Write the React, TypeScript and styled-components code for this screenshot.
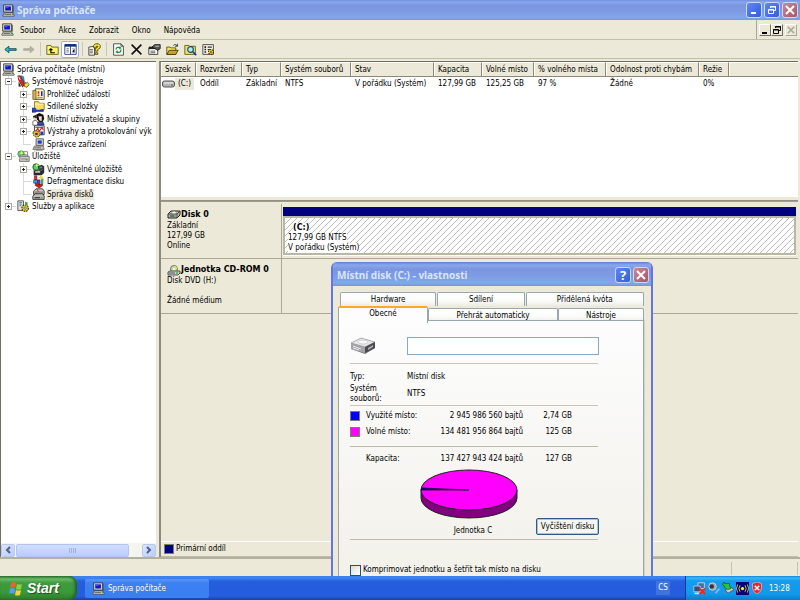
import React from "react";
import styled, { createGlobalStyle, css } from "styled-components";

const FACE = "#ece9d8";
const SHADOW = "#aca899";
const UI_FONT = '"DejaVu Sans Condensed", "Open Sans", sans-serif';
const BOLD_FONT = '"DejaVu Sans", "Open Sans", sans-serif';

const GlobalStyle = createGlobalStyle`
  * { box-sizing: border-box; }
  body { margin: 0; font: 8px/10px ${UI_FONT}; color: #000; }
  button, input { font: inherit; color: inherit; padding: 0; margin: 0; border: 0; background: none; }
  ul { list-style: none; margin: 0; padding: 0; }
  h1, h2, h3, p, dl, dd { margin: 0; font: inherit; }
  svg { display: block; flex: none; }
`;

/* ---------- icons ---------- */

type IconProps = { size?: number; children?: React.ReactNode };
const Icon = ({ size = 13, children }: IconProps) => (
  <svg width={size} height={size} viewBox="0 0 16 16" aria-hidden="true">{children}</svg>
);

const ComputerIcon = ({ size }: { size?: number }) => (
  <Icon size={size}>
    <path d="M2 1h11v9H2z" fill="#d4d0c8" stroke="#333" />
    <path d="M4 3h7v5H4z" fill="#0a18c8" />
    <path d="M4 3h4v2H4z" fill="#3a52ff" />
    <path d="M13 1.5l1.5 1v8L13 11z" fill="#555" />
    <path d="M3 11h10l2 3v1H1v-1z" fill="#d8d5ca" stroke="#333" strokeWidth=".8" />
    <path d="M3 13h8" stroke="#555" />
    <path d="M12 13h2" stroke="#0a0" />
  </Icon>
);
const ToolsIcon = () => (
  <Icon>
    <path d="M5 1l3 1 1 6 5 5-2 2-6-4z" fill="#22b4ec" stroke="#003a80" strokeWidth=".7" />
    <path d="M1 1l3 0 3 5 2 5-2 4-3-5-2-4z" fill="#e02818" stroke="#400" strokeWidth=".7" />
    <path d="M2 8l3 6H2z" fill="#1a1a1a" />
    <path d="M9 11l4-2 2 3-3 3-3-1z" fill="#ffd84a" stroke="#5a4200" strokeWidth=".8" />
    <path d="M2 2l2 4" stroke="#fff" />
  </Icon>
);
const EventIcon = () => (
  <Icon>
    <path d="M4 1h9l2 2v11H4z" fill="#fff8b8" stroke="#333" />
    <path d="M1 3h4v11H1z" fill="#d2b04a" stroke="#443300" strokeWidth=".7" />
    <path d="M7 4h2v3H7zM7 8h2v2H7z" fill="#e02020" />
    <path d="M11 4h2v6h-2z" fill="#1530d0" />
    <path d="M6 12h7" stroke="#666" />
  </Icon>
);
const SharedIcon = () => (
  <Icon>
    <path d="M3 2h5l1 2h6v8H3z" fill="#f7df63" stroke="#8a6d0c" />
    <path d="M4 5h10" stroke="#fffbd0" />
    <path d="M0 10h4l2 2h8v2H6l-2 1H0z" fill="#2744c8" stroke="#001060" strokeWidth=".7" />
    <path d="M5 11h4l3 1H6z" fill="#f2d4b4" />
  </Icon>
);
const UsersIcon = () => (
  <Icon>
    <path d="M5 2l4-2 5 2 1 5-2 4h-4L6 8z" fill="#101010" />
    <path d="M8 4l4 0 0 6-3-1z" fill="#f7dccb" />
    <path d="M1 4l4-2 1 4-3 3z" fill="#242424" />
    <path d="M2 5l4 2-1 3-3-1z" fill="#f2cfb3" />
    <path d="M1 10l4-1 3 4-2 2H1z" fill="#fff" stroke="#222" strokeWidth=".7" />
    <path d="M7 11l6-1 2 4-1 1H7z" fill="#1c50c0" stroke="#012" strokeWidth=".6" />
    <path d="M9 11l2 3" stroke="#d02020" />
  </Icon>
);
const AlertsIcon = () => (
  <Icon>
    <path d="M3 1h12v11H3z" fill="#fff" stroke="#222" />
    <path d="M5 8l2-4 2 4 3-5 2 3" fill="none" stroke="#d01818" strokeWidth="1.3" />
    <path d="M4 3h10" stroke="#2048c0" />
    <path d="M1 9l3-2 4 1 2 3-1 3-4 1-3-2z" fill="#d8b833" stroke="#3c2d00" strokeDasharray="2 1" />
    <path d="M4 10h3v2H4z" fill="#222" />
    <path d="M10 8l4 0v3l-3 2z" fill="#243bb6" />
  </Icon>
);
const DeviceIcon = () => (
  <Icon>
    <path d="M5 1h9v8H5z" fill="#d8d6ce" stroke="#444" />
    <path d="M7 3h5v4H7z" fill="#1a40c8" />
    <path d="M3 10h11l1 4H1z" fill="#c6c4bc" stroke="#444" strokeWidth=".8" />
    <path d="M3 12h8M5 15h8" stroke="#666" />
  </Icon>
);
const StorageIcon = () => (
  <Icon>
    <circle cx="5" cy="5" r="4" fill="#6fd66b" stroke="#2f6f45" strokeWidth=".8" />
    <path d="M5 1l3 3-3 1z" fill="#f4ef5a" />
    <circle cx="5" cy="5" r="1" fill="#fff" />
    <path d="M4 6h8l3 2v6H3z" fill="#cfcdc8" stroke="#444" strokeWidth=".8" />
    <path d="M8 2h5v4" fill="none" stroke="#777" />
    <path d="M5 8h9M5 11h8" stroke="#777" />
    <path d="M11 12h2" stroke="#0a0" />
  </Icon>
);
const RemovableIcon = () => (
  <Icon>
    <circle cx="5" cy="5" r="4" fill="#54cf68" stroke="#164c2c" />
    <path d="M5 1l4 2-4 2z" fill="#f8e83c" />
    <path d="M7 4l5-2 3 2v4l-6 1z" fill="#333" />
    <path d="M2 9h10l3-2v5l-3 3H2z" fill="#2a2a2a" />
    <path d="M4 10h6v2H4z" fill="#cfcfcf" />
    <path d="M9 5l3-1 1 2-4 1z" fill="#3b88d8" />
  </Icon>
);
const DefragIcon = () => (
  <Icon>
    <path d="M3 1h3v5H3z" fill="#e62a2a" stroke="#500" strokeWidth=".6" />
    <path d="M2 6h5v4H2z" fill="#28a8f0" stroke="#003" strokeWidth=".6" />
    <path d="M7 6h3v6H7z" fill="#a020c0" stroke="#303" strokeWidth=".6" />
    <path d="M8 3l3-2 3 2-3 2z" fill="#f0d429" />
    <path d="M4 10l6 2 3-2v3l-4 3-5-3z" fill="#d61515" stroke="#400" strokeWidth=".6" />
    <path d="M11 5l3-1v6l-3 1z" fill="#2bbb50" />
  </Icon>
);
const DisksIcon = () => (
  <Icon>
    <path d="M2 4l3-3h8l2 3v4H2z" fill="#ccc9c2" stroke="#222" />
    <path d="M3 5h11M3 7h3" stroke="#555" />
    <path d="M1 10l3-3h9l2 3v4H1z" fill="#bdbab4" stroke="#222" />
    <path d="M3 12h7" stroke="#333" strokeWidth="1.4" />
    <path d="M11 12h2" stroke="#0b0" />
    <path d="M6 1l2 4" stroke="#c81f1f" />
  </Icon>
);
const ServicesIcon = () => (
  <Icon>
    <path d="M1 1h7v12H1z" fill="#e4e1d8" stroke="#444" />
    <path d="M3 3h3M3 5h3M3 7h2" stroke="#1c62b4" />
    <circle cx="10" cy="10" r="4" fill="#e8c936" stroke="#3e3000" strokeWidth="1.4" strokeDasharray="2 1" />
    <circle cx="10" cy="10" r="1.4" fill="#fff" stroke="#222" strokeWidth=".7" />
    <path d="M10 2l3 1v3h-3z" fill="#3c9a3c" />
  </Icon>
);
const VolumeIcon = () => (
  <svg width="13" height="8" viewBox="0 0 13 8" aria-hidden="true">
    <rect x=".5" y="1" width="12" height="6" rx="2" fill="#b5b5b5" stroke="#555" />
    <path d="M2 3h9" stroke="#f2f2f2" />
    <path d="M9 5h2" stroke="#2a7a2a" />
  </svg>
);
const HardDiskIcon = () => (
  <svg width="14" height="10" viewBox="0 0 14 10" aria-hidden="true">
    <path d="M1 4l3-3h9v4l-3 3H1z" fill="#b9b9b3" stroke="#222" />
    <path d="M1 4h9l3-3M10 4v4" fill="none" stroke="#444" />
    <path d="M3 6h4" stroke="#222" />
    <path d="M7 6h2" stroke="#0b0" />
    <ellipse cx="7" cy="2.500" rx="2" ry="1" fill="#eee" />
  </svg>
);
const CdDriveIcon = () => (
  <svg width="14" height="11" viewBox="0 0 14 11" aria-hidden="true">
    <circle cx="7" cy="4" r="3.500" fill="#b9e4b0" stroke="#555" strokeWidth=".8" />
    <path d="M7 4l1-3 3 2z" fill="#f4e63c" />
    <circle cx="7" cy="4" r="1" fill="#fff" />
    <path d="M1 7l2-1h10v2l-2 2H1z" fill="#ccc" stroke="#333" strokeWidth=".8" />
    <path d="M2 8h6" stroke="#555" />
    <path d="M9 8h2" stroke="#0a0" />
  </svg>
);

const BackIcon = () => (
  <Icon><path d="M1 8l5-4v3h9v2H6v3z" fill="#19c8cf" stroke="#093a46" /></Icon>
);
const ForwardIcon = () => (
  <Icon><path d="M15 8l-5-4v3H2v2h8v3z" fill="#b5b2a4" stroke="#aaa798" /></Icon>
);
const FolderUpIcon = () => (
  <Icon>
    <path d="M1 3h5l1 2h8v9H1z" fill="#fff56e" stroke="#5a5200" />
    <path d="M6 8v4h5" fill="none" stroke="#000" strokeWidth="1.400" />
    <path d="M3 9l3-3 3 3z" fill="#000" />
  </Icon>
);
const TreeToggleIcon = () => (
  <Icon>
    <path d="M1 2h14v12H1z" fill="#fff" stroke="#14287c" />
    <path d="M1 3h14" stroke="#14287c" strokeWidth="3" />
    <path d="M8 4v10" stroke="#14287c" />
    <path d="M3 7h3M3 9h3M3 11h3" stroke="#667" />
    <path d="M13 7v5l-3-2z" fill="#111" />
    <path d="M10 7h3M10 12h3" stroke="#8890a8" />
  </Icon>
);
const HelpSheetIcon = () => (
  <Icon>
    <path d="M1 5l7-1v11H1z" fill="#f6f3e8" stroke="#333" />
    <path d="M2 8h4M2 10h4M2 12h4" stroke="#555" />
    <path d="M7 6V3l2-2h4l2 2v3l-3 2v2H9V7l3-2V4h-2v2z" fill="#ffe92c" stroke="#3d3700" />
    <path d="M9 12h3v2H9z" fill="#ffe92c" stroke="#3d3700" />
  </Icon>
);
const RefreshIcon = () => (
  <Icon>
    <path d="M2 1h9l3 3v11H2z" fill="#fff" stroke="#333" />
    <path d="M11 1v3h3" fill="none" stroke="#333" />
    <path d="M5 8c0-3 3-3 5-2M11 8c0 4-3 4-5 3" fill="none" stroke="#159034" strokeWidth="1.600" />
    <path d="M9 4l3 2-3 2zM7 9l-3 2 3 2z" fill="#159034" />
  </Icon>
);
const DeleteIcon = () => (
  <Icon><path d="M2 2l12 12M14 2L2 14" stroke="#111" strokeWidth="2" /></Icon>
);
const PropertiesIcon = () => (
  <Icon>
    <path d="M1 6h11v8H1z" fill="#fff" stroke="#222" />
    <path d="M1 6h11" stroke="#222" strokeWidth="3" />
    <path d="M3 10h6M3 12h6" stroke="#444" />
    <path d="M5 5l3-3h7v5l-3 2z" fill="#555" stroke="#111" />
    <path d="M9 4h5" stroke="#ddd" />
  </Icon>
);
const OpenIcon = () => (
  <Icon>
    <path d="M1 5h4l1 1h6v8H1z" fill="#f7e95c" stroke="#4b4300" />
    <path d="M1 14l3-5h11l-3 5z" fill="#c8ac1c" stroke="#332c00" />
    <path d="M9 3c2-2 4-1 5 1M14 1v3h-3" fill="none" stroke="#222" />
  </Icon>
);
const SearchIcon = () => (
  <Icon>
    <path d="M1 3h5l1 1h7v10H1z" fill="#f1e168" stroke="#5c5300" />
    <circle cx="8" cy="8" r="3.500" fill="#a8eef6" stroke="#14506c" strokeWidth="1.400" />
    <path d="M11 11l4 4" stroke="#1838b0" strokeWidth="2" />
  </Icon>
);
const SettingsIcon = () => (
  <Icon>
    <path d="M1 2h13v12H1z" fill="#f3f1e6" stroke="#333" />
    <path d="M3 5h2M3 8h2M3 11h2" stroke="#222" strokeWidth="2" />
    <path d="M7 5h5M7 8h3" stroke="#333" strokeWidth="1.400" />
    <circle cx="11" cy="11" r="3" fill="#f4d02e" stroke="#332a00" strokeWidth="1.300" strokeDasharray="2 1" />
    <circle cx="11" cy="11" r="1" fill="#222" />
  </Icon>
);

/* ---------- frame ---------- */

const Screen = styled.div`
  display: flex;
  flex-direction: column;
  height: 100vh;
  overflow: hidden;
  background: ${FACE};
`;
const Workspace = styled.main`
  position: relative;
  display: flex;
  flex-direction: column;
  flex: 1;
  min-height: 0;
  overflow: hidden;
`;
const TitleBar = styled.header`
  display: flex;
  align-items: center;
  gap: 2px;
  flex: none;
  height: 20px;
  padding: 0 2px;
  color: #dbe5fa;
  background: linear-gradient(#6f8fe0 0, #8aa8ee 2px, #7a96e0 5px, #7d9be4 12px, #83a8ea 18px, #7694de 20px);
`;
const TitleText = styled.h1`
  flex: 1;
  font: bold 10px/14px "Noto Sans", sans-serif;
  white-space: nowrap;
`;
const CaptionButton = styled.button<{ $tone?: "close" }>`
  display: grid;
  place-items: center;
  width: 16px;
  height: 16px;
  border: 1px solid #c9d8fa;
  border-radius: 3px;
  background: ${(p) =>
    p.$tone === "close"
      ? "linear-gradient(135deg, #c58a9b, #ad5363)"
      : "linear-gradient(135deg, #6287ee, #2f5fdd)"};
  color: #fff;
`;
const MenuBar = styled.nav`
  display: flex;
  align-items: center;
  flex: none;
  height: 20px;
  padding-left: 1px;
  border-bottom: 1px solid #c0bda9;
`;
const MenuList = styled.div`
  display: flex;
  gap: 1px;
`;
const MenuButton = styled.button`
  padding: 3px 6px 1px;
  white-space: nowrap;
`;
const MdiButtons = styled.div`
  display: flex;
  align-items: center;
  height: 100%;
  margin-left: auto;
  padding: 0 3px 0 2px;
  border-left: 1px solid ${SHADOW};
`;
const MdiButton = styled.button<{ $spaced?: boolean }>`
  display: grid;
  place-items: center;
  width: 12px;
  height: 12px;
  margin-left: ${(p) => (p.$spaced ? 2 : 0)}px;
  border: 1px solid;
  border-color: #fff #716f64 #716f64 #fff;
  color: #000;
  &:disabled { color: ${SHADOW}; border-right-color: ${SHADOW}; border-bottom-color: ${SHADOW}; }
`;
const Toolbar = styled.div`
  display: flex;
  align-items: center;
  flex: none;
  height: 19px;
  padding-left: 1px;
  border-bottom: 1px solid #c0bda9;
`;
const ToolButton = styled.button<{ $pressed?: boolean }>`
  display: grid;
  place-items: center;
  width: 18px;
  height: 17px;
  border: 1px solid ${(p) => (p.$pressed ? "#9db4dc" : "transparent")};
  border-radius: 2px;
  background: ${(p) => (p.$pressed ? "#fff" : "transparent")};
`;
const ToolSeparator = styled.span`
  width: 1px;
  height: 14px;
  margin: 0 2px 0 3px;
  background: #cbc8b6;
`;

/* ---------- console tree ---------- */

const Content = styled.div`
  display: flex;
  flex: 1;
  min-height: 0;
  padding-top: 2px;
  gap: 3px;
`;
const TreePane = styled.aside`
  display: flex;
  flex-direction: column;
  flex: none;
  width: 156px;
  border-top: 1px solid #716f64;
  border-left: 1px solid #716f64;
  background: #fff;
`;
const Tree = styled.ul`
  display: grid;
  grid-template-rows: repeat(12, minmax(0, 1fr));
  height: 151px;
  padding-top: 1px;
`;
const TreeRow = styled.li`
  display: flex;
  align-items: center;
  min-height: 0;
  white-space: nowrap;
`;
const Guide = styled.span<{ $line: "none" | "full" | "half"; $arm: boolean }>`
  display: grid;
  place-items: center;
  flex: none;
  width: 15px;
  height: 100%;
  background:
    linear-gradient(#d9d9d9, #d9d9d9) 7px 0 / ${(p) => (p.$line === "none" ? "0 0" : p.$line === "half" ? "1px 50%" : "1px 100%")} no-repeat,
    linear-gradient(#d9d9d9, #d9d9d9) 7px 50% / ${(p) => (p.$arm ? "8px 1px" : "0 0")} no-repeat;
`;
const Toggle = styled.button`
  display: grid;
  place-items: center;
  width: 7px;
  height: 7px;
  border: 1px solid #a9a9a0;
  background: #fff;
`;
const TreeIcon = styled.span`
  margin: 0 1px;
`;
const TreeLabel = styled.span<{ $selected?: boolean }>`
  padding: 1px 1px 0;
  background: ${(p) => (p.$selected ? FACE : "transparent")};
`;
const ScrollBar = styled.div`
  display: flex;
  align-items: center;
  gap: 1px;
  flex: none;
  height: 14px;
  margin-top: auto;
  background: #f5f5f0;
`;
const ScrollButton = styled.button`
  display: grid;
  place-items: center;
  width: 14px;
  height: 13px;
  border: 1px solid #b6c8f0;
  border-radius: 2px;
  background: linear-gradient(135deg, #dbe6fe, #b9cdfa);
`;
const ScrollTrack = styled.div`
  flex: 1;
  height: 13px;
`;
const ScrollThumb = styled.div`
  display: grid;
  place-items: center;
  width: 90%;
  height: 100%;
  border: 1px solid #b3c5ef;
  border-radius: 2px;
  background: linear-gradient(#d2defe, #b9ccfb);
`;

type Node = {
  label: string;
  depth: number;
  icon: React.ReactNode;
  toggle?: "open" | "closed";
  last?: boolean;
  selected?: boolean;
};
const nodes: Node[] = [
  { label: "Správa počítače (místní)", depth: 0, icon: <ComputerIcon size={13} /> },
  { label: "Systémové nástroje", depth: 1, icon: <ToolsIcon />, toggle: "open" },
  { label: "Prohlížeč událostí", depth: 2, icon: <EventIcon />, toggle: "closed" },
  { label: "Sdílené složky", depth: 2, icon: <SharedIcon />, toggle: "closed" },
  { label: "Místní uživatelé a skupiny", depth: 2, icon: <UsersIcon />, toggle: "closed" },
  { label: "Výstrahy a protokolování výk", depth: 2, icon: <AlertsIcon />, toggle: "closed" },
  { label: "Správce zařízení", depth: 2, icon: <DeviceIcon />, last: true },
  { label: "Úložiště", depth: 1, icon: <StorageIcon />, toggle: "open" },
  { label: "Vyměnitelné úložiště", depth: 2, icon: <RemovableIcon />, toggle: "closed" },
  { label: "Defragmentace disku", depth: 2, icon: <DefragIcon /> },
  { label: "Správa disků", depth: 2, icon: <DisksIcon />, last: true, selected: true },
  { label: "Služby a aplikace", depth: 1, icon: <ServicesIcon />, toggle: "closed", last: true },
];

const TreeItem = ({ node }: { node: Node }) => (
  <TreeRow role="treeitem" aria-level={node.depth + 1} aria-selected={!!node.selected}>
    {Array.from({ length: node.depth }, (_, i) => {
      const own = i === node.depth - 1;
      return (
        <Guide key={i} $line={own && node.last ? "half" : "full"} $arm={own}>
          {own && node.toggle && (
            <Toggle aria-label={node.toggle === "open" ? "Sbalit" : "Rozbalit"}>
              <svg width="5" height="5" viewBox="0 0 5 5">
                <path d={node.toggle === "open" ? "M1 2.500h3" : "M1 2.500h3M2.500 1v3"} stroke="#222" />
              </svg>
            </Toggle>
          )}
        </Guide>
      );
    })}
    <TreeIcon>{node.icon}</TreeIcon>
    <TreeLabel $selected={node.selected}>{node.label}</TreeLabel>
  </TreeRow>
);

/* ---------- volume list ---------- */

const DetailPane = styled.section`
  display: flex;
  flex-direction: column;
  flex: 1;
  min-width: 0;
  margin-right: 2px;
  border-top: 1px solid #716f64;
  border-left: 2px solid #8d8a7d;
`;
const VolumeList = styled.div`
  flex: none;
  height: 134px;
  background: #fff;
`;
const VolumeTable = styled.table`
  width: 100%;
  table-layout: fixed;
  border-collapse: separate;
  border-spacing: 0;
  white-space: nowrap;
`;
const HeadCell = styled.th`
  height: 15px;
  padding: 1px 0 0 4px;
  overflow: hidden;
  font-weight: normal;
  text-align: left;
  border-right: 1px solid #8b887b;
  border-bottom: 1px solid #8b887b;
  border-top: 1px solid #fff;
  box-shadow: inset 1px 0 #fff;
  background: ${FACE};
  &:last-child { border-right: 0; }
`;
const Cell = styled.td`
  height: 13px;
  padding: 1px 0 0 4px;
`;
const VolumeName = styled.span`
  display: flex;
  align-items: center;
  margin-left: -3px;
`;
const NameTag = styled.span`
  padding: 1px 3px;
  background: ${FACE};
`;
const Splitter = styled.div`
  flex: none;
  height: 8px;
  border-top: 1px solid #fff;
  background: linear-gradient(${FACE} 3px, #8b887b 3px, #a8a598 5px, ${FACE} 5px);
`;
const columns: [string, number?][] = [
  ["Svazek", 35], ["Rozvržení", 46], ["Typ", 39], ["Systém souborů", 70], ["Stav", 83],
  ["Kapacita", 48], ["Volné místo", 52], ["% volného místa", 72], ["Odolnost proti chybám", 93],
  ["Režie", 30], [""],
];
const values = ["Oddíl", "Základní", "NTFS", "V pořádku (Systém)", "127,99 GB", "125,25 GB", "97 %", "Žádné", "0%", ""];

/* ---------- disk map ---------- */

const DiskMap = styled.div`
  flex: 1;
  min-height: 0;
`;
const DiskRow = styled.article`
  display: grid;
  grid-template-columns: 121px 1fr;
  height: 55px;
  border-bottom: 1px solid ${SHADOW};
`;
const DiskInfo = styled.div`
  padding: 5px 0 0 6px;
  border-right: 1px solid ${SHADOW};
  white-space: pre-line;
`;
const DiskName = styled.h2`
  display: flex;
  align-items: center;
  height: 12px;
  font: bold 8px/10px ${BOLD_FONT};
  white-space: nowrap;
`;
const Partition = styled.div`
  margin: 3px 2px 4px 1px;
  display: flex;
  flex-direction: column;
  border-bottom: 1px solid #fff;
`;
const PartitionBand = styled.div`
  height: 9px;
  background: #000080;
`;
const PartitionBody = styled.div`
  flex: 1;
  padding: 5px 3px 0;
  border: 2px solid #bab7a6;
  background: linear-gradient(135deg, transparent 42%, #bdbdbd 46%, #bdbdbd 54%, transparent 58%) 0 0 / 6px 6px #fff;
`;
const Halo = styled.p<{ $name?: boolean }>`
  width: fit-content;
  background: #fff;
  ${(p) => p.$name && css`font: bold 8px/10px ${BOLD_FONT}; margin-left: 5px;`}
`;
const Legend = styled.footer`
  display: flex;
  align-items: center;
  gap: 2px;
  flex: none;
  height: 16px;
  padding-left: 3px;
  border-top: 1px solid #fff;
  border-bottom: 1px solid #c0bda9;
`;
const Swatch = styled.span<{ $color: string }>`
  flex: none;
  width: 10px;
  height: 10px;
  border: 1px solid #817e70;
  background: ${(p) => p.$color};
`;
const StatusBar = styled.div`
  display: flex;
  flex: none;
  height: 19px;
  padding: 3px 2px 1px;
  border-top: 2px solid #b3b0a1;
`;
const StatusCell = styled.div<{ $width?: number }>`
  ${(p) => (p.$width ? `flex: none; width: ${p.$width}px;` : "flex: 1;")}
  border-right: 1px solid #c5c2b0;
`;

/* ---------- properties dialog ---------- */

const Dialog = styled.section`
  position: absolute;
  left: 331px;
  top: 262px;
  width: 322px;
  height: 400px;
  display: flex;
  flex-direction: column;
  border: 2px solid #6577dc;
  border-top: 0;
  border-radius: 6px 6px 0 0;
  overflow: hidden;
  background: ${FACE};
`;
const DialogTitle = styled.header`
  display: flex;
  align-items: center;
  gap: 2px;
  flex: none;
  height: 24px;
  padding: 2px 2px 0 4px;
  color: #dbe5fa;
  background: linear-gradient(#5f7cd6 0, #8aa8ee 3px, #7a96e0 7px, #7d9be4 14px, #83a8ea 21px, #7694de 24px);
`;
const DialogBody = styled.div`
  display: flex;
  flex-direction: column;
  flex: 1;
  padding: 6px 7px 6px 5px;
`;
const TabRow = styled.div<{ $template: string; $front?: boolean }>`
  display: grid;
  grid-template-columns: ${(p) => p.$template};
  align-items: end;
  gap: ${(p) => (p.$front ? 0 : 1)}px;
  height: 14px;
  padding-left: ${(p) => (p.$front ? 0 : 2)}px;
`;
const Tab = styled.button<{ $active?: boolean }>`
  height: ${(p) => (p.$active ? 17 : 14)}px;
  margin-bottom: ${(p) => (p.$active ? -1 : 0)}px;
  padding-bottom: ${(p) => (p.$active ? 4 : 0)}px;
  border: 1px solid #98a8ac;
  border-bottom: 0;
  border-radius: 2px 2px 0 0;
  white-space: nowrap;
  background: linear-gradient(#fff, #fbfbf9 60%, #ecebe4);
  ${(p) => p.$active && css`
    z-index: 1;
    border-top: 2px solid #ffa827;
    background: #fdfdfd;
  `}
`;
const TabPanel = styled.div`
  flex: 1;
  padding: 16px 45px 0 11px;
  border: 1px solid #98a8ac;
  box-shadow: 1px 0 #d5d2c3;
  background: linear-gradient(#fdfdfe, #f2f1ea 250px);
`;
const NameRow = styled.div`
  display: flex;
  gap: 30px;
  height: 27px;
  border-bottom: 1px solid #c9c6b8;
`;
const NameInput = styled.input`
  flex: 1;
  min-width: 0;
  height: 18px;
  margin-right: -1px;
  padding: 0 3px;
  border: 1px solid #8aa9c8;
  background: #fff;
`;
const Facts = styled.dl`
  display: grid;
  grid-template-columns: 57px 1fr;
  grid-template-rows: 12px 20px;
  row-gap: 1px;
  align-items: center;
  height: 42px;
  padding-top: 7px;
  border-bottom: 1px solid #c9c6b8;
`;
const FactTerm = styled.dt`
  width: 45px;
`;
const UsageRow = styled.div`
  display: grid;
  grid-template-columns: 12px 50px 1fr 45px 22px;
  column-gap: 4px;
  align-items: center;
  height: 16px;
  text-align: right;
  white-space: nowrap;
`;
const UsageName = styled.span`
  text-align: left;
`;
const UsageBlock = styled.div`
  height: 41px;
  padding-top: 2px;
  border-bottom: 1px solid #bdbaa8;
`;
const TotalBlock = styled.div`
  padding-top: 4px;
`;
const ChartRow = styled.div`
  display: grid;
  grid-template-columns: 70px 98px 1fr;
  height: 73px;
  align-items: end;
  padding: 2px 0 4px;
  border-bottom: 1px solid #bdbaa8;
`;
const Chart = styled.figure`
  grid-column: 2;
  display: flex;
  flex-direction: column;
  align-items: center;
  gap: 7px;
  margin: 0;
`;
const ChartCaption = styled.figcaption`
  padding-left: 8px;
`;
const CleanupButton = styled.button`
  justify-self: end;
  width: 63px;
  height: 17px;
  margin: 0 -1px 1px 0;
  border: 1px solid #2f5a86;
  border-radius: 2px;
  box-shadow: inset 0 0 0 1px #a9c3e8;
  background: #f6f5f0;
  white-space: nowrap;
`;
const CheckRow = styled.label`
  display: flex;
  align-items: center;
  gap: 2px;
  height: 12px;
  margin-top: 24px;
  white-space: nowrap;
`;
const CheckBox = styled.input`
  appearance: none;
  flex: none;
  width: 11px;
  height: 11px;
  border: 1px solid #1c5180;
  background: linear-gradient(135deg, #dcdcd7, #fff);
`;

const DriveIcon = () => (
  <svg width="27" height="18" viewBox="0 0 27 18" aria-hidden="true">
    <path d="M1 6l10-5 14 4v6l-10 6-14-5z" fill="#777" />
    <path d="M1 6l10-5 14 4-10 5z" fill="#e7e7ea" stroke="#999" strokeWidth=".6" />
    <path d="M1 6l14 4v6L1 12z" fill="#a5a5a9" />
    <path d="M15 10l10-5v6l-10 5z" fill="#4b4b50" />
    <ellipse cx="13" cy="5" rx="5" ry="2" fill="#f9f9fb" stroke="#bbb" strokeWidth=".6" />
    <path d="M3 9l8 3M3 11l6 2" stroke="#ececf0" />
    <path d="M18 11l5-3v2l-5 3z" fill="#b0b0b6" />
  </svg>
);
const PieChart = () => (
  <svg width="98" height="50" viewBox="0 0 98 50" role="img" aria-label="Využití jednotky C">
    <path d="M1 21v8a48 20 0 0 0 96 0v-8z" fill="#800080" stroke="#222" />
    <ellipse cx="49" cy="21" rx="48" ry="20" fill="#ff00ff" stroke="#222" />
    <path d="M1 21l48 0L2 19z" fill="#0000c0" stroke="#101030" strokeWidth=".8" />
  </svg>
);

/* ---------- taskbar ---------- */

const Taskbar = styled.footer`
  display: flex;
  align-items: stretch;
  flex: none;
  height: 24px;
  color: #fff;
  background: linear-gradient(#3a7ff0 0, #3f86f2 2px, #2660dd 5px, #245bdb 12px, #245fdf 20px, #1941a5 24px);
`;
const StartButton = styled.button`
  display: flex;
  align-items: center;
  gap: 4px;
  width: 77px;
  padding-left: 8px;
  border-radius: 0 8px 8px 0;
  background: linear-gradient(#2f7d2e 0, #6cb96a 3px, #3f9b3e 7px, #3a9a3a 16px, #2d7c2c 24px);
  box-shadow: inset -2px 0 3px #245d23;
  color: #fff;
  font: italic bold 14px/20px "Liberation Sans", sans-serif;
  text-shadow: 1px 1px 1px #1c4a1b;
`;
const TaskButton = styled.button`
  display: flex;
  align-items: center;
  gap: 3px;
  width: 124px;
  margin: 3px 0 2px 8px;
  padding-left: 7px;
  border-radius: 2px;
  background: linear-gradient(#5b97f8, #3c81f3 4px, #3a7ef0);
  color: #fff;
`;
const Language = styled.button`
  width: 14px;
  height: 14px;
  margin: 5px 15px 0 auto;
  background: #3e74dc;
`;
const Tray = styled.div`
  display: flex;
  align-items: center;
  gap: 2px;
  width: 115px;
  padding-left: 7px;
  border-left: 1px solid #0c3c9c;
  background: linear-gradient(#0f86dd 0, #3cb7f7 2px, #149bf0 5px, #119aec 18px, #0d7cc9 24px);
`;
const Clock = styled.time`
  padding: 1px 0 0 4px;
`;

const FlagIcon = () => (
  <svg width="15" height="15" viewBox="0 0 15 15" aria-hidden="true">
    <path d="M3 2q2-2 5 0l-1 5q-3-2-5 0z" fill="#f0602c" />
    <path d="M9 3q3 1 5 0l-1 5q-3 1-5 0z" fill="#8ed044" />
    <path d="M2 8q2-2 5 0l-1 5q-3-2-5 0z" fill="#52a0f4" />
    <path d="M8 9q2 1 5 0l-1 5q-3 1-5 0z" fill="#fbd233" />
  </svg>
);
const NetworkTray = () => (
  <Icon size={13}>
    <path d="M6 1h8v7H6z" fill="#536a9c" stroke="#dde" />
    <path d="M1 5h8v7H1z" fill="#384a78" stroke="#ccd" />
    <path d="M2 14h7" stroke="#ddd" strokeWidth="2" />
    <path d="M8 8l7 7M15 8l-7 7" stroke="#ee2a20" strokeWidth="2.400" />
  </Icon>
);
const SoundTray = () => (
  <Icon size={12}>
    <circle cx="6" cy="6" r="5" fill="#a0a4a8" stroke="#d8dcdf" />
    <circle cx="5" cy="6" r="3" fill="#33373b" />
    <path d="M10 15l5-6" stroke="#8cb4ff" strokeWidth="2.500" />
  </Icon>
);
const DeviceTray = () => (
  <Icon size={12}>
    <path d="M4 10l8-3 4 3-8 5z" fill="#c9cdd2" stroke="#445" />
    <path d="M7 10L3 7V5L0 3l3-3v2h7v3l2 4z" fill="#2fc239" stroke="#0a6a18" />
  </Icon>
);
const SignalTray = () => (
  <Icon size={13}>
    <path d="M0 0h16v16H0z" fill="#000070" />
    <circle cx="8" cy="8" r="2" fill="#ffec3a" />
    <path d="M5 4q-3 4 0 8M11 4q3 4 0 8M2 3q-3 5 0 10M14 3q3 5 0 10" fill="none" stroke="#ffec3a" />
  </Icon>
);
const ShieldTray = () => (
  <Icon size={12}>
    <path d="M8 0l6 2v6q0 5-6 8-6-3-6-8V2z" fill="#e02430" stroke="#f2b8bc" />
    <path d="M5 5l6 6M11 5l-6 6" stroke="#fff" strokeWidth="2" />
  </Icon>
);

const MinimizeGlyph = () => (
  <svg width="10" height="10" viewBox="0 0 10 10"><path d="M2 8h5" stroke="currentColor" strokeWidth="2" /></svg>
);
const RestoreGlyph = () => (
  <svg width="10" height="10" viewBox="0 0 10 10" fill="none" stroke="currentColor">
    <path d="M3.500 3V1.500h5v4H7M3 2h6M1.500 4.500h5v4h-5zM1 5h6" />
  </svg>
);
const CloseGlyph = ({ size = 10 }: { size?: number }) => (
  <svg width={size} height={size} viewBox="0 0 10 10"><path d="M1 1l8 8M9 1L1 9" stroke="currentColor" strokeWidth="2" /></svg>
);
const Arrow = ({ back }: { back?: boolean }) => (
  <svg width="6" height="8" viewBox="0 0 6 8">
    <path d={back ? "M5 1L2 4l3 3" : "M1 1l3 3-3 3"} fill="none" stroke="#4d6185" strokeWidth="2" />
  </svg>
);
const HelpMark = styled.span`
  font: bold 13px/14px "Noto Sans", sans-serif;
`;

export default function App() {
  return (
    <Screen>
      <GlobalStyle />
      <Workspace>
        <TitleBar>
          <ComputerIcon size={13} />
          <TitleText>Správa počítače</TitleText>
          <CaptionButton aria-label="Minimalizovat"><MinimizeGlyph /></CaptionButton>
          <CaptionButton aria-label="Obnovit"><RestoreGlyph /></CaptionButton>
          <CaptionButton $tone="close" aria-label="Zavřít"><CloseGlyph /></CaptionButton>
        </TitleBar>
        <MenuBar>
          <ComputerIcon size={13} />
          <MenuList>
            {["Soubor", "Akce", "Zobrazit", "Okno", "Nápověda"].map((m) => (
              <MenuButton key={m}>{m}</MenuButton>
            ))}
          </MenuList>
          <MdiButtons>
            <MdiButton aria-label="Minimalizovat podokno"><MinimizeGlyph /></MdiButton>
            <MdiButton aria-label="Obnovit podokno"><RestoreGlyph /></MdiButton>
            <MdiButton $spaced disabled aria-label="Zavřít podokno"><CloseGlyph size={8} /></MdiButton>
          </MdiButtons>
        </MenuBar>
        <Toolbar>
          <ToolButton aria-label="Zpět"><BackIcon /></ToolButton>
          <ToolButton aria-label="Vpřed" disabled><ForwardIcon /></ToolButton>
          <ToolSeparator />
          <ToolButton aria-label="O úroveň výš"><FolderUpIcon /></ToolButton>
          <ToolButton aria-label="Strom konzoly" aria-pressed $pressed><TreeToggleIcon /></ToolButton>
          <ToolSeparator />
          <ToolButton aria-label="Nápověda k tématu"><HelpSheetIcon /></ToolButton>
          <ToolSeparator />
          <ToolButton aria-label="Aktualizovat"><RefreshIcon /></ToolButton>
          <ToolButton aria-label="Odstranit"><DeleteIcon /></ToolButton>
          <ToolButton aria-label="Vlastnosti"><PropertiesIcon /></ToolButton>
          <ToolButton aria-label="Otevřít"><OpenIcon /></ToolButton>
          <ToolButton aria-label="Prozkoumat"><SearchIcon /></ToolButton>
          <ToolButton aria-label="Nastavení"><SettingsIcon /></ToolButton>
        </Toolbar>

        <Content>
          <TreePane>
            <Tree role="tree">
              {nodes.map((n) => <TreeItem key={n.label} node={n} />)}
            </Tree>
            <ScrollBar>
              <ScrollButton aria-label="Posunout vlevo"><Arrow back /></ScrollButton>
              <ScrollTrack>
                <ScrollThumb>
                  <svg width="7" height="5" viewBox="0 0 7 5">
                    <path d="M.5 0v5M2.500 0v5M4.500 0v5M6.500 0v5" stroke="#99b2ec" />
                  </svg>
                </ScrollThumb>
              </ScrollTrack>
              <ScrollButton aria-label="Posunout vpravo"><Arrow /></ScrollButton>
            </ScrollBar>
          </TreePane>

          <DetailPane>
            <VolumeList>
              <VolumeTable>
                <colgroup>
                  {columns.map(([name, width]) => <col key={name} width={width} />)}
                </colgroup>
                <thead>
                  <tr>{columns.map(([name]) => <HeadCell key={name}>{name}</HeadCell>)}</tr>
                </thead>
                <tbody>
                  <tr>
                    <Cell><VolumeName><VolumeIcon /><NameTag>(C:)</NameTag></VolumeName></Cell>
                    {values.map((v, i) => <Cell key={i}>{v}</Cell>)}
                  </tr>
                </tbody>
              </VolumeTable>
            </VolumeList>
            <Splitter />
            <DiskMap>
              <DiskRow>
                <DiskInfo>
                  <DiskName><HardDiskIcon />Disk 0</DiskName>
                  {"Základní\n127,99 GB\nOnline"}
                </DiskInfo>
                <Partition>
                  <PartitionBand />
                  <PartitionBody>
                    <Halo $name>(C:)</Halo>
                    <Halo>127,99 GB NTFS</Halo>
                    <Halo>V pořádku (Systém)</Halo>
                  </PartitionBody>
                </Partition>
              </DiskRow>
              <DiskRow>
                <DiskInfo>
                  <DiskName><CdDriveIcon />Jednotka CD-ROM 0</DiskName>
                  {"Disk DVD (H:)\n\nŽádné médium"}
                </DiskInfo>
              </DiskRow>
            </DiskMap>
            <Legend><Swatch $color="#000080" />Primární oddíl</Legend>
          </DetailPane>
        </Content>
        <StatusBar>
          <StatusCell />
          <StatusCell $width={66} />
        </StatusBar>

        <Dialog role="dialog" aria-label="Místní disk (C:) - vlastnosti">
          <DialogTitle>
            <TitleText as="h2">Místní disk (C:) - vlastnosti</TitleText>
            <CaptionButton aria-label="Nápověda"><HelpMark>?</HelpMark></CaptionButton>
            <CaptionButton $tone="close" aria-label="Zavřít dialog"><CloseGlyph /></CaptionButton>
          </DialogTitle>
          <DialogBody>
            <TabRow $template="96fr 87fr 118fr">
              <Tab>Hardware</Tab>
              <Tab>Sdílení</Tab>
              <Tab>Přidělená kvóta</Tab>
            </TabRow>
            <TabRow $front $template="90fr 130fr 86fr">
              <Tab $active>Obecné</Tab>
              <Tab>Přehrát automaticky</Tab>
              <Tab>Nástroje</Tab>
            </TabRow>
            <TabPanel>
              <NameRow>
                <DriveIcon />
                <NameInput aria-label="Název svazku" defaultValue="" />
              </NameRow>
              <Facts>
                <FactTerm>Typ:</FactTerm><dd>Místní disk</dd>
                <FactTerm>Systém souborů:</FactTerm><dd>NTFS</dd>
              </Facts>
              <UsageBlock>
                <UsageRow>
                  <Swatch $color="#0000ff" /><UsageName>Využité místo:</UsageName>
                  <span>2 945 986 560 bajtů</span><span>2,74 GB</span>
                </UsageRow>
                <UsageRow>
                  <Swatch $color="#ff00ff" /><UsageName>Volné místo:</UsageName>
                  <span>134 481 956 864 bajtů</span><span>125 GB</span>
                </UsageRow>
              </UsageBlock>
              <TotalBlock>
                <UsageRow>
                  <span /><UsageName>Kapacita:</UsageName>
                  <span>137 427 943 424 bajtů</span><span>127 GB</span>
                </UsageRow>
              </TotalBlock>
              <ChartRow>
                <Chart>
                  <PieChart />
                  <ChartCaption>Jednotka C</ChartCaption>
                </Chart>
                <CleanupButton>Vyčištění disku</CleanupButton>
              </ChartRow>
              <CheckRow>
                <CheckBox type="checkbox" />
                Komprimovat jednotku a šetřit tak místo na disku
              </CheckRow>
            </TabPanel>
          </DialogBody>
        </Dialog>
      </Workspace>

      <Taskbar>
        <StartButton><FlagIcon />Start</StartButton>
        <TaskButton><ComputerIcon size={13} />Správa počítače</TaskButton>
        <Language>CS</Language>
        <Tray>
          <NetworkTray />
          <SoundTray />
          <DeviceTray />
          <SignalTray />
          <ShieldTray />
          <Clock>13:28</Clock>
        </Tray>
      </Taskbar>
    </Screen>
  );
}
